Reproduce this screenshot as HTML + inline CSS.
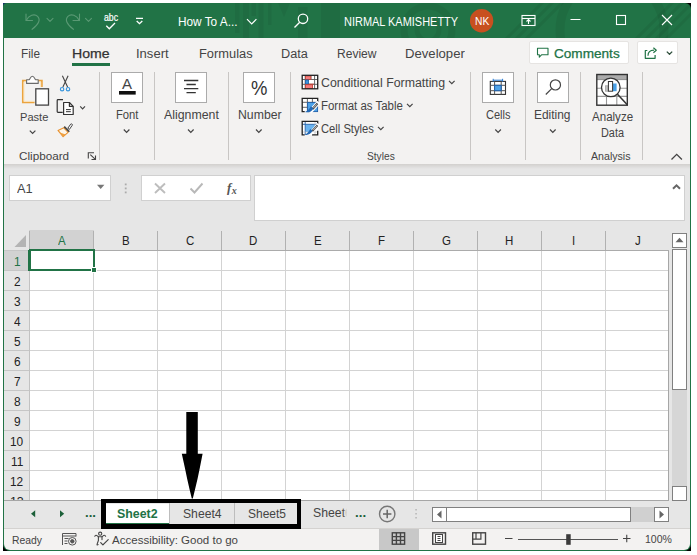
<!DOCTYPE html>
<html lang="en">
<head>
<meta charset="utf-8">
<title>Excel - How To A...</title>
<style>
html,body{margin:0;padding:0;background:#fff;}
body{width:697px;height:555px;position:relative;overflow:hidden;font-family:"Liberation Sans",sans-serif;}
.a{position:absolute;box-sizing:border-box;}
.t{position:absolute;transform-origin:0 0;white-space:pre;line-height:16px;font-family:"Liberation Sans",sans-serif;}
svg{position:absolute;overflow:visible;}
.sep{position:absolute;width:1px;background:#c8c6c4;top:72px;height:88px;}
.bigbtn{position:absolute;box-sizing:border-box;top:72px;height:31px;width:32px;background:#fff;border:1px solid #ababab;}
.chev{fill:none;stroke:#444;stroke-width:1.2;}
</style>
</head>
<body>
<!-- window frame -->
<div class="a" style="left:3px;top:540px;width:10px;height:11px;background:#000;"></div><div class="a" style="left:681px;top:540px;width:10px;height:11px;background:#000;"></div><div class="a" style="left:3px;top:3px;width:8px;height:8px;background:#1b2f6b;"></div><div class="a" style="left:683px;top:3px;width:8px;height:8px;background:#000;"></div>
<div class="a" id="win" style="left:3px;top:3px;width:688px;height:548px;background:#217346;border-radius:4px 6px 7px 7px;"></div>
<!-- title bar decorations -->
<div class="a" style="left:3px;top:3px;width:688px;height:35px;overflow:hidden;border-radius:4px 6px 0 0;">
  <svg style="left:0;top:0" width="688" height="35" viewBox="3 3 688 35">
    <g fill="rgba(0,0,0,0.055)">
      <rect x="235" y="3" width="4.500" height="30"/>
      <rect x="243" y="3" width="6" height="35"/>
      <rect x="251.500" y="3" width="4.500" height="13"/>
      <rect x="258.500" y="3" width="5" height="35"/>
      <rect x="268" y="3" width="3.500" height="22"/>
      <path d="M278 3h12l-6 14z"/>
      <rect x="298" y="7" width="9.500" height="31"/>
      <rect x="321" y="3" width="19" height="35"/>
    </g>
    <g fill="none" stroke="rgba(0,0,0,0.06)">
      <circle cx="428" cy="30" r="24" stroke-width="7"/>
      <circle cx="428" cy="30" r="11" stroke-width="5"/>
      <circle cx="612" cy="30" r="52" stroke-width="9"/>
      <path d="M640 45l50-50M650 45l50-50M660 45l50-50M630 45l50-50" stroke-width="3"/>
      <path d="M500 45l45-45M510 45l45-45M520 45l45-45" stroke-width="3"/>
    </g>
  </svg>
</div>
<!-- ribbon background -->
<div class="a" style="left:4px;top:38px;width:686px;height:126px;background:#f3f2f1;"></div>
<!-- formula/grid area background -->
<div class="a" style="left:4px;top:164px;width:686px;height:365px;background:#e6e6e6;"></div>
<div class="a" style="left:4px;top:164px;width:686px;height:5px;background:linear-gradient(#d2d0ce,#e6e6e6);"></div>
<!-- status bar -->
<div class="a" style="left:4px;top:529px;width:686px;height:21px;background:#f3f2f1;border-radius:0 0 6px 6px;"></div>

<!-- ===== title bar icons ===== -->
<svg style="left:0;top:0" width="697" height="40" viewBox="0 0 697 40">
  <!-- undo -->
  <g fill="none" stroke="#5a9974" stroke-width="1.1" stroke-linecap="round" stroke-linejoin="round">
    <path d="M26 14v6.5h6.5"/><path d="M26.3 20.3c2.5-5 8-7 11.300-4c3.300 3.300 1 8-5.500 13"/>
    <path d="M47 18.300l3 3l3-3"/>
    <!-- redo -->
    <path d="M79.500 14v6.500h-6.500"/><path d="M79.200 20.300c-2.500-5-8-7-11.300-4c-3.300 3.300-1 8 5.500 13"/>
    <path d="M85.500 18.300l3 3l3-3"/>
  </g>
  <!-- abc check -->
  <path d="M106.300 25.800l3 3l5.700-5.800" fill="none" stroke="#fff" stroke-width="1.3"/>
  <!-- QAT customize -->
  <path d="M136 18.400h7M136.700 21l2.800 2.700l2.800-2.700" fill="none" stroke="#fff" stroke-width="1.300"/>
  <!-- title chevron -->
  <path d="M247 19.200l4.700 4.700l4.700-4.700" fill="none" stroke="#fff" stroke-width="1.200"/>
  <!-- search -->
  <circle cx="303" cy="18.800" r="4.700" fill="none" stroke="#fff" stroke-width="1.300"/>
  <path d="M299.700 22.200l-5.200 5.300" stroke="#fff" stroke-width="1.300"/>
  <!-- avatar -->
  <circle cx="481.600" cy="20.700" r="11.700" fill="#c8501f"/>
  <!-- ribbon display options -->
  <g fill="none" stroke="#fff" stroke-width="1.100">
    <rect x="522" y="15.500" width="13" height="10"/>
    <path d="M522 18.500h13"/>
    <path d="M528.500 24v-4.500M526.500 21.500l2-2l2 2"/>
  </g>
  <!-- minimize -->
  <path d="M570.500 19.500h10" stroke="#fff" stroke-width="1"/>
  <!-- maximize -->
  <rect x="616.500" y="15.500" width="9" height="9" fill="none" stroke="#fff" stroke-width="1.100"/>
  <!-- close -->
  <path d="M662 15l10 10M672 15l-10 10" stroke="#fff" stroke-width="1.100"/>
</svg>

<!-- ===== tab row ===== -->
<div class="a" style="left:72px;top:63px;width:38px;height:3px;background:#217346;"></div>
<div class="a" style="left:529px;top:41px;width:100px;height:23px;background:#fff;border:1px solid #e6e4e2;border-radius:2px;"></div>
<div class="a" style="left:637px;top:41px;width:41px;height:23px;background:#fff;border:1px solid #e6e4e2;border-radius:2px;"></div>
<svg style="left:0;top:0" width="697" height="70" viewBox="0 0 697 70">
  <path d="M537.500 48.300h10.500v6.500h-6.500l-2.200 2.400v-2.400h-1.800z" fill="none" stroke="#217346" stroke-width="1.100" stroke-linejoin="round"/>
  <g fill="none" stroke="#217346" stroke-width="1.200" stroke-linejoin="round">
    <path d="M647.300 50.500h-2v7.800h9.800v-3.300"/>
    <path d="M648 55.800c0-3.400 2.300-5.500 6-5.600"/>
    <path d="M653.400 47.700l2.900 2.500l-2.900 2.500"/>
    <path d="M666.800 51.600l2.700 2.700l2.700-2.700" stroke="#2f4f3c" stroke-width="1.300"/>
  </g>
</svg>

<!-- ===== ribbon ===== -->
<div class="sep" style="left:99px"></div>
<div class="sep" style="left:154px"></div>
<div class="sep" style="left:228px"></div>
<div class="sep" style="left:290px"></div>
<div class="sep" style="left:470px"></div>
<div class="sep" style="left:525px"></div>
<div class="sep" style="left:580px"></div>
<div class="sep" style="left:642px"></div>
<div class="bigbtn" style="left:111px"></div>
<div class="bigbtn" style="left:175px"></div>
<div class="bigbtn" style="left:243px"></div>
<div class="bigbtn" style="left:482px"></div>
<div class="bigbtn" style="left:537px"></div>

<svg style="left:0;top:60px" width="697" height="110" viewBox="0 60 697 110">
  <!-- paste: clipboard -->
  <g>
    <path d="M41.900 87v-6.400h-19.100v21.900h11.800" fill="none" stroke="#eba43e" stroke-width="1.700"/>
    <path d="M40.700 87v-5.200h-16.700v19.500h10.500" fill="none" stroke="#fbe2b8" stroke-width="0.900"/>
    <path d="M26.600 83.400v-3.700h2.600c0.800-0.300 1.200-3.500 3.200-3.500s2.400 3.200 3.200 3.500h2.600v3.700z" fill="#fff" stroke="#6a6a6a" stroke-width="1.100" stroke-linejoin="round"/>
    <rect x="35.800" y="88.800" width="12.700" height="16.300" fill="#fff" stroke="#444" stroke-width="1.300"/>
  </g>
  <path class="chev" d="M29.800 130.700l2.800 2.800l2.800-2.800"/>
  <!-- scissors -->
  <g fill="none" stroke-width="1.100">
    <path d="M62.400 75.800l5.200 11.300M68.100 75.800l-5.200 11.300" stroke="#444"/>
    <circle cx="62.100" cy="89.200" r="1.700" stroke="#3a96dd" stroke-width="1.200"/>
    <circle cx="68" cy="89.200" r="1.700" stroke="#3a96dd" stroke-width="1.200"/>
  </g>
  <!-- copy -->
  <g fill="none" stroke="#333" stroke-width="1.200" stroke-linejoin="round">
    <path d="M63 99.700h-5a0.800 0.800 0 0 0 -0.800 0.800v11a0.800 0.800 0 0 0 0.800 0.800h4.700"/>
    <path d="M63.600 102.500h5.800l3.800 3.800v8.200h-9.600z" fill="#fff"/>
    <path d="M69.400 102.500v3.800h3.800"/>
    <path d="M66 109.600h4.800M66 111.700h4.800" stroke-width="1"/>
  </g>
  <path class="chev" d="M80.200 106.400l2.400 2.400l2.400-2.400"/>
  <!-- format painter -->
  <g stroke-linejoin="round">
    <path d="M63.800 127.800l-5.800 2.600l5.100 6.300l5-4.400z" fill="#fdf6ea" stroke="#e8912d" stroke-width="1.100"/>
    <path d="M59.800 132.600l3.300 4.100l2.600-2.300z" fill="#f0a040" stroke="none"/>
    <path d="M64.200 126.600l5.100 5.100" stroke="#444" stroke-width="1.600" fill="none"/>
    <path d="M67.800 128.300l2.900-4.200a1 1 0 0 1 1.600 1.100l-2.900 4.200z" fill="#fff" stroke="#444" stroke-width="1"/>
  </g>
  <!-- dialog launcher -->
  <g fill="none" stroke="#444" stroke-width="1.100">
    <path d="M94 152.700h-5.700v5.700"/>
    <path d="M90.300 154.700l4.800 4.500M95.500 155.500v4h-4"/>
  </g>
  <!-- Font A -->
  <rect x="119" y="91" width="16.700" height="3.600" fill="#111"/>
  <!-- font chevron -->
  <path class="chev" d="M123.800 129.500l2.800 2.800l2.800-2.800"/>
  <!-- alignment icon -->
  <g stroke="#333" stroke-width="1.300">
    <path d="M184 80.500h14.300M186.500 84.500h9.300M184 88.600h14.300M186.500 92.600h9.300"/>
  </g>
  <path class="chev" d="M188 129.500l2.800 2.800l2.800-2.800"/>
  <path class="chev" d="M256 129.500l2.800 2.800l2.800-2.800"/>
  <!-- conditional formatting icon -->
  <g>
    <rect x="302.200" y="75.300" width="15.500" height="13.500" fill="#fff"/>
    <path d="M302.200 79.500h15.500M302.200 84.300h15.500M305.200 75.300v13.500M314.600 75.300v13.500" stroke="#555" stroke-width="0.900" fill="none"/>
    <path d="M311 75.300v4.200" stroke="#777" stroke-width="0.800" fill="none"/>
    <rect x="305.500" y="75.900" width="5.400" height="3.500" fill="#f47c7c" stroke="#c0392b" stroke-width="0.800"/>
    <rect x="305.500" y="80" width="3.100" height="4" fill="#3a96dd" stroke="#1f5fa8" stroke-width="0.800"/>
    <path d="M308.600 84.100h5.300" stroke="#c0392b" stroke-width="0.800"/>
    <rect x="305.500" y="84.700" width="7.100" height="3.700" fill="#f47c7c" stroke="#c0392b" stroke-width="0.800"/>
    <rect x="302.200" y="75.300" width="15.500" height="13.500" fill="none" stroke="#222" stroke-width="1.300"/>
  </g>
  <!-- format as table icon -->
  <g>
    <rect x="302.200" y="98.400" width="15.500" height="13.300" fill="#fff"/>
    <path d="M302.200 102.300h15.500M302.200 107.300h15.500M307.400 98.400v13.300M312.400 98.400v13.300" stroke="#555" stroke-width="0.900" fill="none"/>
    <rect x="307.600" y="102.500" width="10" height="9.100" fill="#4fa3e8" stroke="#1f5fa8" stroke-width="0.900"/>
    <path d="M317.700 103v-4.600h-15.500v13.300h2.500" fill="none" stroke="#222" stroke-width="1.300"/>
    <path d="M318.800 102.200l-9 10" stroke="#fff" stroke-width="4.200"/>
    <path d="M317.500 103.500l-5 5.500" stroke="#444" stroke-width="2"/>
    <path d="M316.800 104.300l-3.600 3.900" stroke="#ddd" stroke-width="0.800"/>
    <path d="M313.400 108.400c-1.800 3.300-5 4.500-8.400 3.600c2.600-1 4.200-3 5.900-5.800z" fill="#2368b5"/>
  </g>
  <!-- cell styles icon -->
  <g>
    <rect x="302.200" y="121.400" width="15.500" height="13.400" fill="#fff"/>
    <rect x="305.300" y="124.400" width="9.700" height="7.600" fill="#6ab4f0"/>
    <path d="M305.200 121.400v13.400M302.200 124.300h15.500" stroke="#1f5fa8" stroke-width="0.900" fill="none"/>
    <path d="M315 121.400v13.400M302.200 132h15.500" stroke="#bbb" stroke-width="0.600" fill="none"/>
    <path d="M317.700 125v-3.600h-15.500v13.400h2.500M312 134.800h5.700v-4" fill="none" stroke="#222" stroke-width="1.300"/>
    <path d="M318.800 124.200l-9 10" stroke="#fff" stroke-width="3.600"/>
    <path d="M317.500 125.400l-5.300 5.800" stroke="#444" stroke-width="2"/>
    <path d="M316.800 126.200l-3.800 4.100" stroke="#ddd" stroke-width="0.800"/>
    <path d="M312.600 130.800c-1.800 3.300-4.500 4.700-7.900 3.900c2.600-1 3.900-3 5.500-5.800z" fill="#2368b5"/>
  </g>
  <path class="chev" d="M449 80.800l2.800 2.800l2.800-2.800"/>
  <path class="chev" d="M407 103.800l2.800 2.800l2.800-2.800"/>
  <path class="chev" d="M378 126.800l2.800 2.800l2.800-2.800"/>
  <!-- cells icon -->
  <g fill="none" stroke="#333" stroke-width="1.100">
    <rect x="490.300" y="81.400" width="15.200" height="13" fill="#fff"/>
    <path d="M490.300 85.300h15.200M490.300 90.700h15.200M494.600 81.400v13M501.200 81.400v13" stroke="#555" stroke-width="1"/>
    <rect x="494.600" y="85.300" width="6.600" height="5.400" fill="#4fa3e8" stroke="#1f5fa8" stroke-width="1"/>
    <path d="M493.200 80.200h9.400M493.200 78.800v2.800M502.600 78.800v2.800" stroke="#2b7cd3" stroke-width="1"/>
  </g>
  <path class="chev" d="M495.300 129.500l2.800 2.800l2.800-2.800"/>
  <!-- editing icon -->
  <circle cx="555.400" cy="84.900" r="5.100" fill="none" stroke="#444" stroke-width="1.200"/>
  <path d="M551.700 88.600l-5.900 5.900" stroke="#444" stroke-width="1.200"/>
  <path class="chev" d="M550 129.500l2.800 2.800l2.800-2.800"/>
  <!-- analyze data icon -->
  <g>
    <rect x="596.800" y="74.500" width="30.500" height="30.700" fill="#fff"/>
    <rect x="596.800" y="74.500" width="30.500" height="4.700" fill="#ababab"/>
    <path d="M596.800 79.600h30.500" stroke="#8a8a8a" stroke-width="1" fill="none"/>
    <path d="M596.800 88.200h30.500M596.800 96.400h30.500M606.500 80v25M616.800 80v25" stroke="#999" stroke-width="1.100" fill="none"/>
    <rect x="596.800" y="74.500" width="30.500" height="30.700" fill="none" stroke="#333" stroke-width="1.400"/>
    <circle cx="610.800" cy="87.400" r="9.300" fill="#fff" stroke="#333" stroke-width="1.300"/>
    <rect x="605.500" y="85.800" width="2.700" height="5.400" fill="#c4c4c4" stroke="#999" stroke-width="0.700"/>
    <rect x="612.700" y="83.500" width="3.900" height="7.700" fill="#4aa0e6"/>
    <rect x="608.400" y="81.500" width="4.200" height="9.700" fill="#fff" stroke="#333" stroke-width="1"/>
    <path d="M617.500 94.300l10 10.700" stroke="#333" stroke-width="1.500"/>
  </g>
  <!-- collapse ribbon -->
  <path d="M671.500 159.500l5.200-5.200l5.200 5.200" fill="none" stroke="#444" stroke-width="1.300"/>
</svg>
<span class="t" style="left:121.900px;top:75.500px;font-size:15px;color:#444;">A</span>
<span class="t" style="left:250.800px;top:77.500px;font-size:20.500px;color:#333;line-height:20px;transform:scaleX(0.9);">%</span>

<!-- ===== formula bar ===== -->
<div class="a" style="left:9px;top:175px;width:102px;height:26px;background:#fff;border:1px solid #d0d0d0;"></div>
<div class="a" style="left:141px;top:175px;width:110px;height:26px;background:#fff;border:1px solid #d0d0d0;"></div>
<div class="a" style="left:254px;top:175px;width:431px;height:46px;background:#fff;border:1px solid #d0d0d0;"></div>
<svg style="left:0;top:170px" width="697" height="60" viewBox="0 170 697 60">
  <path d="M97 184.800h7.400l-3.700 4.200z" fill="#777"/>
  <g fill="#ababab"><rect x="124.800" y="183.500" width="1.800" height="1.800"/><rect x="124.800" y="187.500" width="1.800" height="1.800"/><rect x="124.800" y="191.500" width="1.800" height="1.800"/></g>
  <path d="M155 183.500l10 9.500M165 183.500l-10 9.500" stroke="#bdbdbd" stroke-width="1.900" fill="none"/>
  <path d="M190.500 188.500l4 4l8-9" stroke="#b8b8b8" stroke-width="1.900" fill="none"/>
  <path d="M673 188.800l3.500-3.500l3.500 3.500" stroke="#666" stroke-width="2" fill="none"/>
</svg>
<span class="t" style="left:227px;top:179.500px;font-size:13px;color:#555;font-family:'Liberation Serif',serif;font-style:italic;font-weight:700;">f</span>
<span class="t" style="left:231.800px;top:182.500px;font-size:10px;color:#555;font-family:'Liberation Serif',serif;font-style:italic;font-weight:700;">x</span>

<!-- ===== grid ===== -->
<div class="a" id="grid" style="left:4px;top:230px;width:665px;height:270px;overflow:hidden;background:#e6e6e6;">
  <!-- cells area -->
  <div class="a" style="left:25px;top:20px;width:640px;height:250px;background-color:#fff;background-image:linear-gradient(90deg,#d3d3d3 1px,transparent 1px),linear-gradient(#d3d3d3 1px,transparent 1px);background-size:64px 20px,64px 20px;background-position:0 0,0 0;"></div>
  <!-- right edge line -->
  <div class="a" style="left:664px;top:20px;width:1px;height:250px;background:#a6a6a6;"></div>
  <!-- selected col header -->
  <div class="a" style="left:25px;top:0;width:65px;height:20px;background:#d2d2d2;"></div>
  <div class="a" style="left:0;top:20px;width:25px;height:21px;background:#d2d2d2;"></div>
  <!-- header separators -->
  <div class="a" style="left:25px;top:1px;width:640px;height:19px;background-image:linear-gradient(90deg,#b1b1b1 1px,transparent 1px);background-size:64px 19px;"></div>
  <div class="a" style="left:0;top:20px;width:25px;height:250px;background-image:linear-gradient(#c6c6c6 1px,transparent 1px);background-size:25px 20px;"></div>
  <!-- header bottom/ right borders -->
  <div class="a" style="left:25px;top:20px;width:640px;height:1px;background:#ababab;"></div>
  <div class="a" style="left:25px;top:20px;width:1px;height:250px;background:#c2c2c2;"></div>
  <!-- select all triangle -->
  <svg style="left:4px;top:0" width="22" height="21" viewBox="0 0 22 21"><path d="M18 5v12h-11.500z" fill="#b4b4b4"/></svg>
  <!-- selection -->
  <div class="a" style="left:25px;top:19px;width:66px;height:22px;border:2px solid #217346;"></div>
  <div class="a" style="left:87px;top:37px;width:6px;height:6px;background:#217346;border:1px solid #fff;"></div>
  <div class="a" style="left:25px;top:19px;width:65px;height:2px;background:#217346;"></div>
  <div class="a" style="left:24px;top:20px;width:2px;height:21px;background:#217346;"></div>
  <span class="t" style="left:5.920px;top:264.370px;font-size:12.500px;color:#222;">13</span>
</div>
<!-- vertical scrollbar -->
<div class="a" style="left:672px;top:233px;width:15px;height:15px;background:#fff;border:1px solid #808080;"></div>
<div class="a" style="left:672px;top:249px;width:15px;height:141px;background:#fff;border:1px solid #808080;"></div>
<div class="a" style="left:672px;top:390px;width:15px;height:96px;background:#d6d6d6;"></div>
<div class="a" style="left:672px;top:486px;width:15px;height:15px;background:#fff;border:1px solid #808080;z-index:2;"></div>
<svg style="left:0;top:230px" width="697" height="275" viewBox="0 230 697 275">
  <path d="M675.500 242.200h8l-4-4.500z" fill="#666"/>
  <path d="M675.500 491.500h8l-4 4.500z" fill="#666"/>
</svg>

<!-- ===== sheet tab bar ===== -->
<div class="a" style="left:4px;top:500px;width:686px;height:29px;background:#e6e6e6;"></div>
<div class="a" style="left:4px;top:500px;width:665px;height:1px;background:#a6a6a6;"></div>
<div class="a" style="left:4px;top:528px;width:686px;height:1px;background:#d4d2d0;"></div>
<div class="a" style="left:106px;top:504px;width:63px;height:20px;background:#fff;"></div>
<div class="a" style="left:106px;top:522.500px;width:63px;height:1px;background:#217346;"></div>
<div class="a" style="left:169px;top:503px;width:1px;height:21px;background:#bdbdbd;"></div>
<div class="a" style="left:234px;top:503px;width:1px;height:21px;background:#bdbdbd;"></div>
<!-- black annotation box -->
<div class="a" style="left:101px;top:499px;width:199.600px;height:29.600px;border-style:solid;border-color:#000;border-width:4.600px 4.400px 5.500px 5px;"></div>
<!-- arrow -->
<svg style="left:170px;top:405px" width="50" height="100" viewBox="170 405 50 100">
  <path d="M186.300 412h11.500v41.800h4.800l-2.600 13.200l-2.500 12l-2.500 10.500l-2.200 9h-1l-2.200-9l-2.400-10.500l-2.500-12l-2.900-13.200h4.500z" fill="#000"/>
</svg>
<svg style="left:0;top:500px" width="697" height="55" viewBox="0 500 697 55">
  <path d="M35.200 510.300v7l-4.200-3.500z" fill="#1c6039"/>
  <path d="M60 510.300v7l4.200-3.500z" fill="#1c6039"/>
  <!-- plus circle -->
  <circle cx="387.200" cy="514" r="7.700" fill="none" stroke="#777" stroke-width="1.400"/>
  <path d="M383 514h8.400M387.200 509.800v8.400" stroke="#666" stroke-width="1.500"/>
  <g fill="#b5b5b5"><rect x="415.300" y="509" width="1.500" height="1.500"/><rect x="415.300" y="513" width="1.500" height="1.500"/><rect x="415.300" y="517" width="1.500" height="1.500"/></g>
</svg>
<div class="a" style="left:343px;top:504px;width:10px;height:20px;background:linear-gradient(90deg,rgba(230,230,230,0) 0,rgba(230,230,230,1) 4px);z-index:5;"></div>
<!-- h scrollbar -->
<div class="a" style="left:432px;top:507px;width:237px;height:15px;background:#d0d0d0;"></div>
<div class="a" style="left:432px;top:507px;width:15px;height:15px;background:#fff;border:1px solid #808080;"></div>
<div class="a" style="left:446px;top:507px;width:185px;height:15px;background:#fff;border:1px solid #808080;"></div>
<div class="a" style="left:654px;top:507px;width:15px;height:15px;background:#fff;border:1px solid #808080;"></div>
<svg style="left:0;top:500px" width="697" height="55" viewBox="0 500 697 55">
  <path d="M441.500 510.500v8l-4.500-4z" fill="#666"/>
  <path d="M659.500 510.500v8l4.500-4z" fill="#666"/>
</svg>

<!-- ===== status bar ===== -->
<div class="a" style="left:379px;top:529px;width:40px;height:21px;background:#c8c8c8;"></div>
<svg style="left:0;top:525px" width="697" height="30" viewBox="0 525 697 30">
  <!-- macro icon -->
  <g fill="none" stroke="#555" stroke-width="1">
    <path d="M62.500 545v-11.500h13.500v3"/>
    <path d="M62.500 536h13.500"/>
    <path d="M64.500 538.500h4M64.500 541h3M64.500 543.500h3"/>
    <circle cx="72.300" cy="541.300" r="3.800" fill="#f3f2f1"/>
    <circle cx="72.300" cy="541.300" r="1.700" fill="#555"/>
  </g>
  <!-- accessibility icon -->
  <g fill="none" stroke="#444" stroke-width="1.100" stroke-linecap="round" stroke-linejoin="round">
    <circle cx="100.200" cy="533.700" r="1.600"/>
    <path d="M94.800 536.200c0.600-1.300 1.600-1.300 2.600-0.300l1 0.900h3.600l1-0.900c1-1 2-1 2.600 0.300"/>
    <path d="M98.400 536.800v3.700l-1.300 3.600c-0.300 0.800 0.300 1.200 1 0.600"/>
    <path d="M102 536.800v2.800"/>
    <path d="M100.700 542.600l2.200 2.300l5.300-5.300" stroke-width="1.200"/>
  </g>
  <!-- view icons -->
  <g fill="none" stroke="#444" stroke-width="1.400">
    <rect x="392.300" y="532.800" width="12.300" height="11.400"/>
    <path d="M392.300 536.600h12.300M392.300 540.400h12.300M396.400 532.800v11.400M400.500 532.800v11.400"/>
    <rect x="432.700" y="532.800" width="12.800" height="11.400"/>
    <rect x="435.500" y="534.500" width="7" height="8" stroke-width="1" fill="#fff"/>
    <path d="M437.500 536.500h3M437.500 538.500h3M437.500 540.500h3" stroke-width="1"/>
    <rect x="472.700" y="532.800" width="12.800" height="11.400"/>
    <path d="M472.700 539.200h8.200v-6.400M476 532.800v6.400" stroke-width="1.200"/>
  </g>
  <!-- zoom -->
  <path d="M505 538.500h7.500" stroke="#444" stroke-width="1"/>
  <path d="M518 539.500h100" stroke="#555" stroke-width="1"/>
  <rect x="566.200" y="534.200" width="4.500" height="10.600" fill="#3b3b3b"/>
  <path d="M623 538.500h7.500M626.750 534.800v7.500" stroke="#444" stroke-width="1.100"/>
</svg>
<!-- window borders -->
<div class="a" style="left:3px;top:37px;width:1px;height:506px;background:#217346;"></div>
<div class="a" style="left:690px;top:37px;width:1px;height:506px;background:#217346;"></div>

<span class="t" style="left:104.00px;top:9.54px;font-size:10px;color:#fff;transform:scaleX(0.8683);-webkit-text-stroke:0.2px #fff;">abc</span>
<span class="t" style="left:177.96px;top:13.67px;font-size:12.5px;color:#fff;transform:scaleX(0.9450);">How To A...</span>
<span class="t" style="left:343.52px;top:13.67px;font-size:12.5px;color:#fff;transform:scaleX(0.8769);">NIRMAL KAMISHETTY</span>
<span class="t" style="left:475.10px;top:13.02px;font-size:11.5px;color:#fff;transform:scaleX(0.8893);">NK</span>
<span class="t" style="left:21.06px;top:45.67px;font-size:12.5px;color:#444;transform:scaleX(0.9432);">File</span>
<span class="t" style="left:71.97px;top:45.67px;font-size:12.5px;color:#333;transform:scaleX(1.1268);-webkit-text-stroke:0.25px #333;">Home</span>
<span class="t" style="left:136.26px;top:45.67px;font-size:12.5px;color:#444;transform:scaleX(1.0426);">Insert</span>
<span class="t" style="left:198.97px;top:45.67px;font-size:12.5px;color:#444;transform:scaleX(1.0286);">Formulas</span>
<span class="t" style="left:281.38px;top:45.67px;font-size:12.5px;color:#444;transform:scaleX(1.0176);">Data</span>
<span class="t" style="left:337.14px;top:45.67px;font-size:12.5px;color:#444;transform:scaleX(0.9644);">Review</span>
<span class="t" style="left:405.35px;top:45.67px;font-size:12.5px;color:#444;transform:scaleX(1.0499);">Developer</span>
<span class="t" style="left:553.60px;top:45.67px;font-size:12.5px;color:#217346;transform:scaleX(1.0867);-webkit-text-stroke:0.25px #217346;">Comments</span>
<span class="t" style="left:19.60px;top:108.52px;font-size:11.5px;color:#444;transform:scaleX(0.9651);">Paste</span>
<span class="t" style="left:18.80px;top:148.19px;font-size:11px;color:#444;transform:scaleX(1.0646);">Clipboard</span>
<span class="t" style="left:116.20px;top:106.84px;font-size:12px;color:#444;transform:scaleX(0.9361);">Font</span>
<span class="t" style="left:163.60px;top:106.84px;font-size:12px;color:#444;transform:scaleX(1.0291);">Alignment</span>
<span class="t" style="left:238.00px;top:106.84px;font-size:12px;color:#444;transform:scaleX(1.0215);">Number</span>
<span class="t" style="left:321.20px;top:74.84px;font-size:12px;color:#444;transform:scaleX(1.0279);">Conditional Formatting</span>
<span class="t" style="left:321.20px;top:97.84px;font-size:12px;color:#444;transform:scaleX(0.9542);">Format as Table</span>
<span class="t" style="left:321.20px;top:120.84px;font-size:12px;color:#444;transform:scaleX(0.9333);">Cell Styles</span>
<span class="t" style="left:366.60px;top:148.19px;font-size:11px;color:#444;transform:scaleX(0.9260);">Styles</span>
<span class="t" style="left:486.10px;top:106.84px;font-size:12px;color:#444;transform:scaleX(0.9186);">Cells</span>
<span class="t" style="left:534.20px;top:106.84px;font-size:12px;color:#444;transform:scaleX(0.9940);">Editing</span>
<span class="t" style="left:591.60px;top:108.84px;font-size:12px;color:#444;transform:scaleX(0.9624);">Analyze</span>
<span class="t" style="left:600.90px;top:125.44px;font-size:12px;color:#444;transform:scaleX(0.9075);">Data</span>
<span class="t" style="left:591.20px;top:148.19px;font-size:11px;color:#444;transform:scaleX(0.9648);">Analysis</span>
<span class="t" style="left:16.90px;top:181.17px;font-size:12.5px;color:#444;transform:scaleX(1.0236);">A1</span>
<span class="t" style="left:57.56px;top:233.17px;font-size:12.5px;color:#217346;transform:scaleX(0.9200);">A</span>
<span class="t" style="left:121.56px;top:233.17px;font-size:12.5px;color:#222;transform:scaleX(0.9200);">B</span>
<span class="t" style="left:185.56px;top:233.17px;font-size:12.5px;color:#222;transform:scaleX(0.9200);">C</span>
<span class="t" style="left:249.10px;top:233.17px;font-size:12.5px;color:#222;transform:scaleX(0.9200);">D</span>
<span class="t" style="left:313.56px;top:233.17px;font-size:12.5px;color:#222;transform:scaleX(0.9200);">E</span>
<span class="t" style="left:377.56px;top:233.17px;font-size:12.5px;color:#222;transform:scaleX(0.9200);">F</span>
<span class="t" style="left:441.56px;top:233.17px;font-size:12.5px;color:#222;transform:scaleX(0.9200);">G</span>
<span class="t" style="left:505.10px;top:233.17px;font-size:12.5px;color:#222;transform:scaleX(0.9200);">H</span>
<span class="t" style="left:571.86px;top:233.17px;font-size:12.5px;color:#222;transform:scaleX(0.9200);">I</span>
<span class="t" style="left:634.94px;top:233.17px;font-size:12.5px;color:#222;transform:scaleX(0.9200);">J</span>
<span class="t" style="left:13.58px;top:254.37px;font-size:12.5px;color:#217346;transform:scaleX(0.9500);">1</span>
<span class="t" style="left:13.58px;top:274.37px;font-size:12.5px;color:#222;transform:scaleX(0.9500);">2</span>
<span class="t" style="left:13.58px;top:294.37px;font-size:12.5px;color:#222;transform:scaleX(0.9500);">3</span>
<span class="t" style="left:13.58px;top:314.37px;font-size:12.5px;color:#222;transform:scaleX(0.9500);">4</span>
<span class="t" style="left:13.58px;top:334.37px;font-size:12.5px;color:#222;transform:scaleX(0.9500);">5</span>
<span class="t" style="left:13.58px;top:354.37px;font-size:12.5px;color:#222;transform:scaleX(0.9500);">6</span>
<span class="t" style="left:13.58px;top:374.37px;font-size:12.5px;color:#222;transform:scaleX(0.9500);">7</span>
<span class="t" style="left:13.58px;top:394.37px;font-size:12.5px;color:#222;transform:scaleX(0.9500);">8</span>
<span class="t" style="left:13.58px;top:414.37px;font-size:12.5px;color:#222;transform:scaleX(0.9500);">9</span>
<span class="t" style="left:10.27px;top:434.37px;font-size:12.5px;color:#222;transform:scaleX(0.9500);">10</span>
<span class="t" style="left:10.71px;top:454.37px;font-size:12.5px;color:#222;transform:scaleX(0.9500);">11</span>
<span class="t" style="left:10.27px;top:474.37px;font-size:12.5px;color:#222;transform:scaleX(0.9500);">12</span>
<span class="t" style="left:85.20px;top:505.20px;font-size:13px;color:#1c6039;font-weight:700;transform:scaleX(1.0173);">...</span>
<span class="t" style="left:116.60px;top:505.67px;font-size:12.5px;color:#217346;font-weight:700;transform:scaleX(0.9893);">Sheet2</span>
<span class="t" style="left:183.00px;top:505.67px;font-size:12.5px;color:#444;transform:scaleX(0.9731);">Sheet4</span>
<span class="t" style="left:248.00px;top:505.67px;font-size:12.5px;color:#444;transform:scaleX(0.9580);">Sheet5</span>
<span class="t" style="left:313.20px;top:505.17px;font-size:12.5px;color:#444;transform:scaleX(0.9807);">Sheet6</span>
<span class="t" style="left:355.40px;top:505.20px;font-size:13px;color:#1c6039;font-weight:700;transform:scaleX(1.0270);">...</span>
<span class="t" style="left:11.90px;top:532.02px;font-size:11.5px;color:#444;transform:scaleX(0.9017);">Ready</span>
<span class="t" style="left:112.10px;top:531.62px;font-size:11.5px;color:#444;">Accessibility: Good to go</span>
<span class="t" style="left:644.60px;top:530.62px;font-size:11.5px;color:#444;transform:scaleX(0.9148);">100%</span>
</body>
</html>
